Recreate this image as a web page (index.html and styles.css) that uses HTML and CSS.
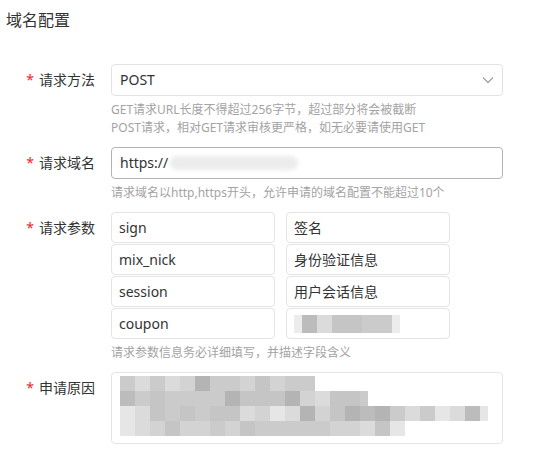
FILE: index.html
```html
<!DOCTYPE html>
<html lang="zh-CN">
<head>
<meta charset="utf-8">
<title>域名配置</title>
<link rel="stylesheet" href="styles.css">
</head>
<body>
<div class="page">
  <h2 class="title">域名配置</h2>
  <div class="form">
    <div class="item">
      <div class="label"><span class="req">*</span>请求方法</div>
      <div class="control">
        <div class="input select">
          <span>POST</span>
          <svg class="chev" width="12" height="8" viewBox="0 0 12 8"><path d="M1 1.5 L6 6.5 L11 1.5" fill="none" stroke="#a3a3a3" stroke-width="1.3"/></svg>
        </div>
        <div class="help">GET请求URL长度不得超过256字节，超过部分将会被截断<br>POST请求，相对GET请求审核更严格，如无必要请使用GET</div>
      </div>
    </div>
    <div class="item">
      <div class="label"><span class="req">*</span>请求域名</div>
      <div class="control">
        <div class="input active">
          <span>https://</span><span class="smudge"></span>
        </div>
        <div class="help">请求域名以http,https开头，允许申请的域名配置不能超过10个</div>
      </div>
    </div>
    <div class="item">
      <div class="label"><span class="req">*</span>请求参数</div>
      <div class="control">
        <div class="params">
          <div class="cell">sign</div><div class="cell">签名</div>
          <div class="cell">mix_nick</div><div class="cell">身份验证信息</div>
          <div class="cell">session</div><div class="cell">用户会话信息</div>
          <div class="cell">coupon</div>
          <div class="cell">
            <div class="mosaic small">
              <div class="mrow"><span class="fade"></span><span class="g2"></span><span class="g6"></span><span class="g3"></span><span class="g3"></span><span class="g4"></span><span class="g4"></span><span class="fade"></span></div>
            </div>
          </div>
        </div>
        <div class="help">请求参数信息务必详细填写，并描述字段含义</div>
      </div>
    </div>
    <div class="item">
      <div class="label"><span class="req">*</span>申请原因</div>
      <div class="control">
        <div class="textarea">
          <div class="mosaic">
            <div class="mrow"><span class="g4"></span><span class="g6"></span><span class="g4"></span><span class="g6"></span><span class="g5"></span><span class="g1"></span><span class="g4"></span><span class="g4"></span><span class="g5"></span><span class="g3"></span><span class="g5"></span><span class="g4"></span><span class="g4"></span></div>
            <div class="mrow"><span class="g2"></span><span class="g4"></span><span class="g3"></span><span class="g4"></span><span class="g4"></span><span class="g4"></span><span class="g4"></span><span class="g1"></span><span class="g3"></span><span class="g3"></span><span class="g3"></span><span class="g1"></span><span class="g5"></span><span class="g6"></span><span class="g3"></span><span class="g3"></span><span class="g4 half"></span></div>
            <div class="mrow"><span class="g7"></span><span class="g6"></span><span class="g3"></span><span class="g4"></span><span class="g3"></span><span class="g4"></span><span class="g3"></span><span class="g3"></span><span class="g6"></span><span class="g5"></span><span class="g7"></span><span class="g6"></span><span class="g1"></span><span class="g5"></span><span class="g3"></span><span class="g1"></span><span class="g2"></span><span class="g1"></span><span class="g4"></span><span class="g6"></span><span class="g4"></span><span class="g7"></span><span class="g6"></span><span class="g2"></span><span class="g7 half"></span></div>
            <div class="mrow"><span class="g7"></span><span class="g6"></span><span class="g5"></span><span class="g3"></span><span class="g5"></span><span class="g5"></span><span class="g4"></span><span class="g5"></span><span class="g3"></span><span class="g4"></span><span class="g4"></span><span class="g4"></span><span class="g4"></span><span class="g4"></span><span class="g5"></span><span class="g5"></span><span class="g6"></span><span class="g3"></span><span class="g7"></span></div>
          </div>
        </div>
      </div>
    </div>
  </div>
</div>
</body>
</html>
```
FILE: styles.css
```css
* { box-sizing: border-box; }
body {
  margin: 0;
  background: #ffffff;
  font-family: "Noto Sans", "Noto Sans CJK SC", sans-serif;
  color: #333333;
}
.page { width: 544px; }
.title {
  margin: 8px 0 0 6px;
  font-size: 16px;
  line-height: 24px;
  font-weight: normal;
  color: #333333;
}
.form { margin-top: 32px; }
.item {
  display: grid;
  grid-template-columns: 95px 392px;
  column-gap: 16px;
  margin-bottom: 10px;
}
.label {
  text-align: right;
  font-size: 14px;
  line-height: 32px;
  color: #333333;
  white-space: nowrap;
}
.req {
  color: #f5222d;
  margin-right: 5px;
  font-size: 14px;
}
.input {
  height: 32px;
  border: 1px solid #e3e3e3;
  border-radius: 4px;
  padding: 0 8px;
  font-size: 14px;
  line-height: 30px;
  color: #333333;
  display: flex;
  align-items: center;
}
.input.active { border-color: #b3b3b3; }
.select { justify-content: space-between; padding-right: 8px; }
.chev { display: block; }
.smudge {
  display: inline-block;
  width: 128px;
  height: 14px;
  margin-left: 2px;
  background: #ececec;
  border-radius: 7px;
  filter: blur(2px);
}
.help {
  margin-top: 5px;
  font-size: 12px;
  line-height: 18px;
  color: #a3a3a3;
}
.params {
  display: grid;
  grid-template-columns: 164px 164px;
  grid-auto-rows: 31px;
  column-gap: 11px;
  row-gap: 1px;
}
.cell {
  border: 1px solid #e4e4e4;
  border-radius: 4px;
  padding: 0 7px;
  font-size: 14px;
  line-height: 29px;
  color: #333333;
  display: flex;
  align-items: center;
}
.textarea {
  height: 72px;
  border: 1px solid #e4e4e4;
  border-radius: 4px;
  padding: 3px 8px;
}
.mosaic { display: flex; flex-direction: column; }
.mrow { display: flex; height: 15px; }
.mrow span { width: 15px; height: 15px; flex: none; }
.mrow span.half { width: 8px; }
.small .mrow { height: 18px; }
.small .mrow span { height: 18px; }
.small .mrow span.fade { width: 8px; background: #ececec; }
.g1 { background: #b4b4b5; }
.g2 { background: #bcbcbd; }
.g3 { background: #c5c5c5; }
.g4 { background: #cbcbcb; }
.g5 { background: #d3d3d3; }
.g6 { background: #dbdbdb; }
.g7 { background: #e6e6e6; }
```
